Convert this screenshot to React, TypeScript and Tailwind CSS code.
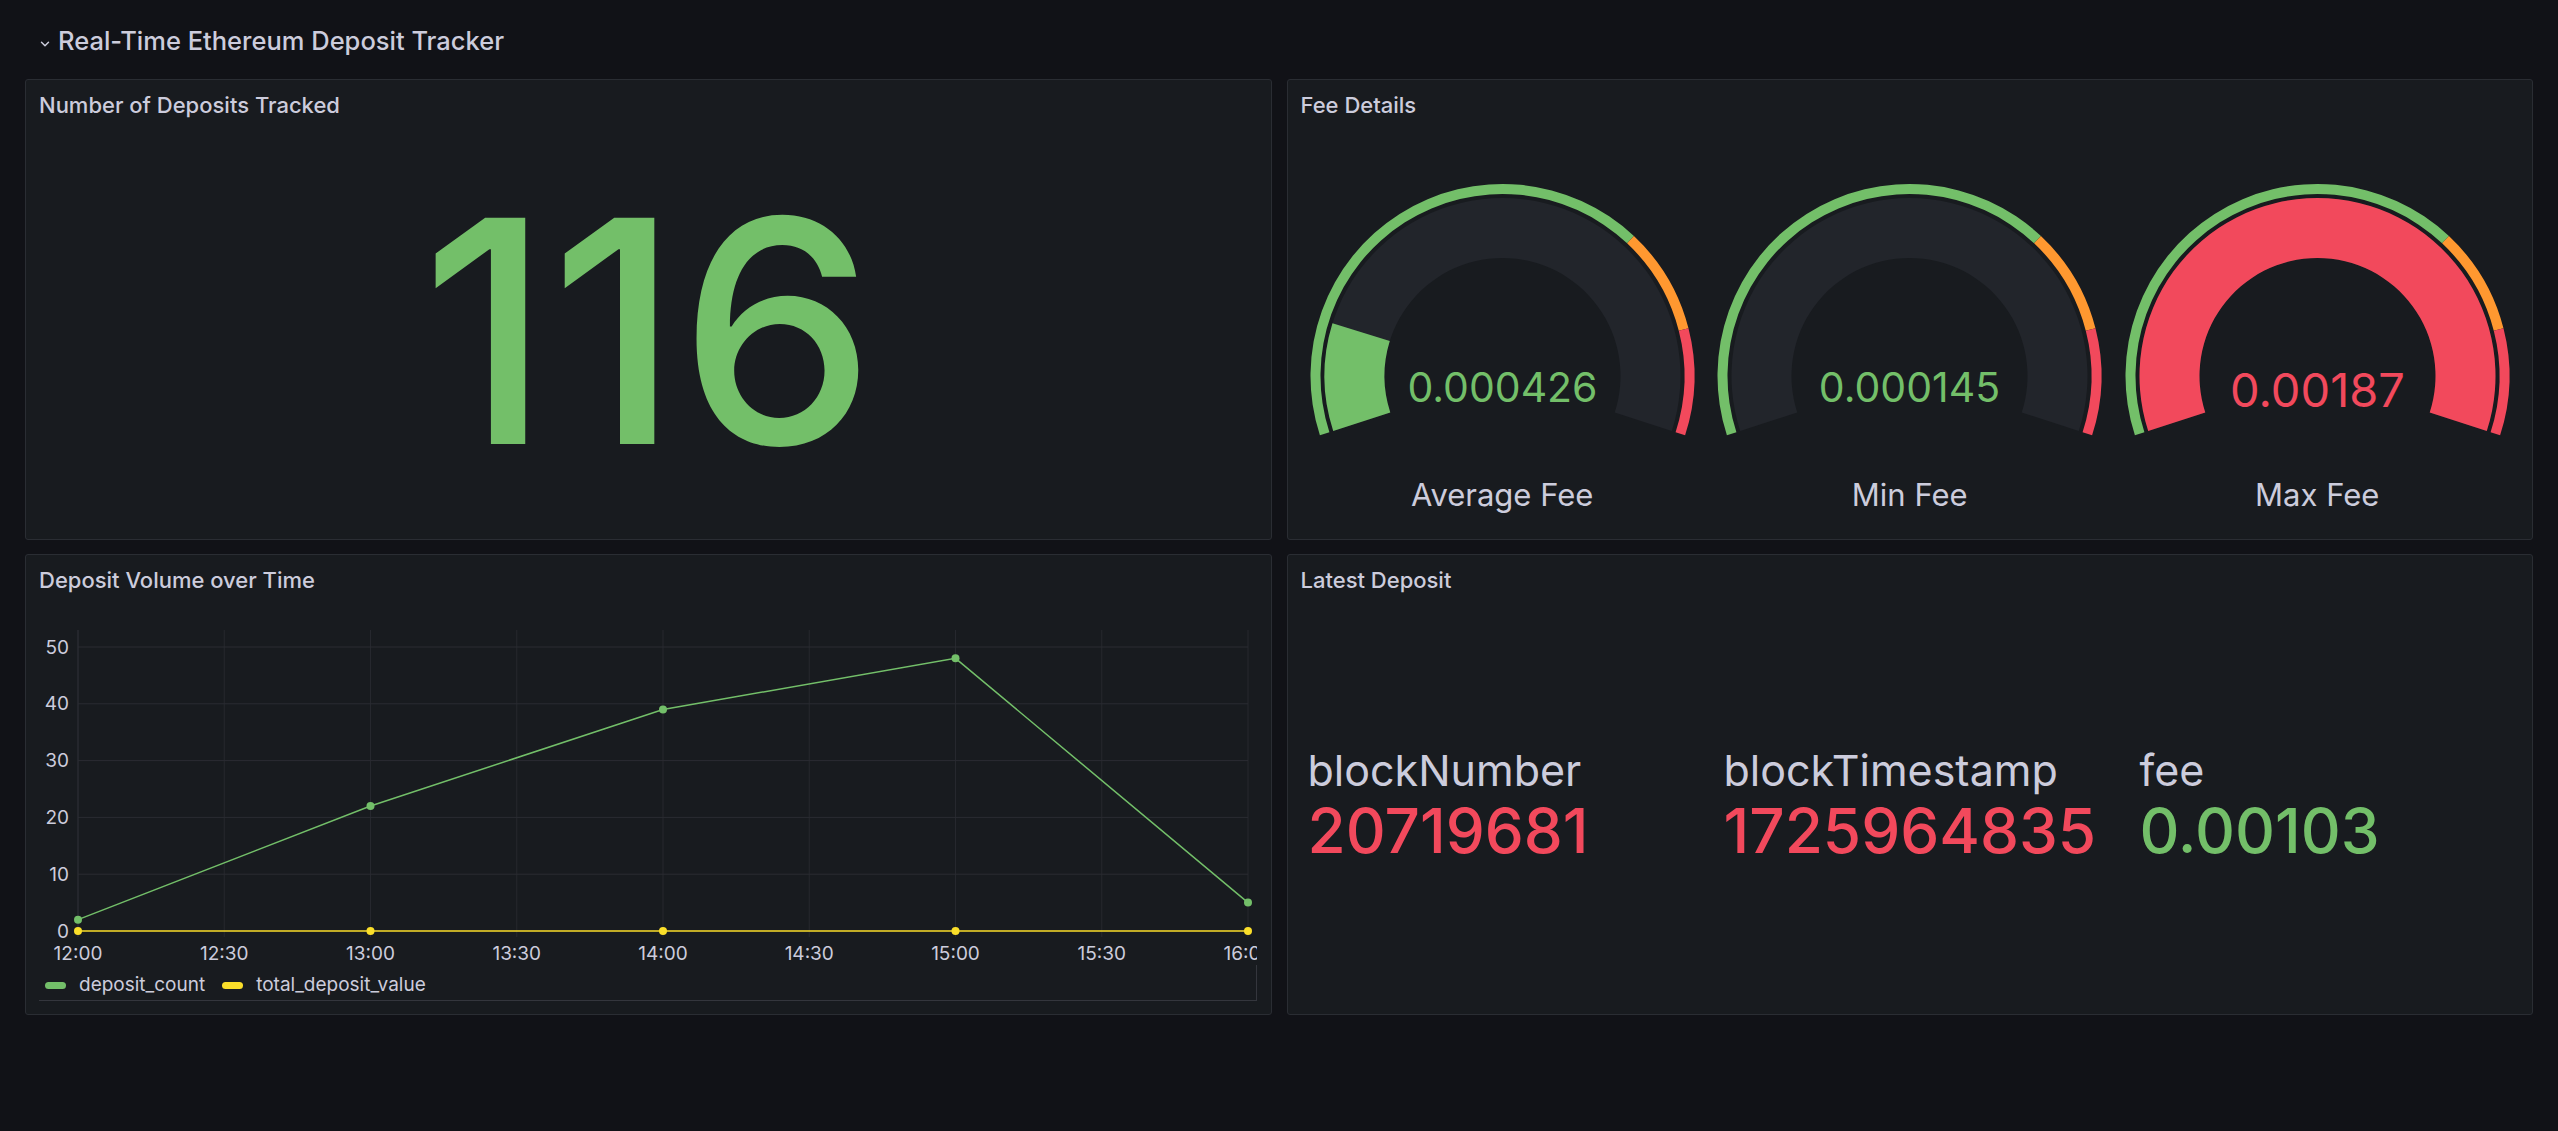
import { ChevronDown } from "lucide-react";

const GREEN = "#73bf69";
const ORANGE = "#ff9830";
const RED = "#f2495c";
const YELLOW = "#fade2a";

// angle 0 = straight up, positive = clockwise
function polar(cx: number, cy: number, r: number, a: number) {
  const rad = (a * Math.PI) / 180;
  return [cx + r * Math.sin(rad), cy - r * Math.cos(rad)];
}

function sector(cx: number, cy: number, rO: number, rI: number, a1: number, a2: number) {
  const large = a2 - a1 > 180 ? 1 : 0;
  const [x1, y1] = polar(cx, cy, rO, a1);
  const [x2, y2] = polar(cx, cy, rO, a2);
  const [x3, y3] = polar(cx, cy, rI, a2);
  const [x4, y4] = polar(cx, cy, rI, a1);
  return `M${x1} ${y1} A${rO} ${rO} 0 ${large} 1 ${x2} ${y2} L${x3} ${y3} A${rI} ${rI} 0 ${large} 0 ${x4} ${y4} Z`;
}

const START = -108;
const SWEEP = 216;
const at = (f: number) => START + f * SWEEP;

const gauges = [
  { label: "Average Fee", value: "0.000426", frac: 0.163, color: GREEN, size: 41, base: 226 },
  { label: "Min Fee", value: "0.000145", frac: 0, color: GREEN, size: 41, base: 226 },
  { label: "Max Fee", value: "0.00187", frac: 1, color: RED, size: 47, base: 231 },
];

type GaugeProps = { label: string; value: string; frac: number; color: string; size: number; base: number };

function Gauge({ label, value, frac, color, size, base }: GaugeProps) {
  const cx = 203.5;
  const cy = 200;
  return (
    <div className="flex flex-col items-center">
      <svg width="407" height="270" viewBox="0 0 407 270">
        <path d={sector(cx, cy, 192, 182, at(0), at(0.7))} fill={GREEN} />
        <path d={sector(cx, cy, 192, 182, at(0.7), at(0.85))} fill={ORANGE} />
        <path d={sector(cx, cy, 192, 182, at(0.85), at(1))} fill={RED} />
        <path d={sector(cx, cy, 178, 118, at(0), at(1))} fill="#22252b" />
        {frac > 0 && <path d={sector(cx, cy, 178, 118, at(0), at(frac))} fill={color} />}
        <text x={cx} y={base} textAnchor="middle" fontSize={size} fill={color} fontFamily="Inter, sans-serif">
          {value}
        </text>
      </svg>
      <div className="mt-[29px] h-[40px] leading-[40px] text-[31px] text-[#ccccdc]">{label}</div>
    </div>
  );
}

function Panel({ title, children }: { title: string; children?: React.ReactNode }) {
  return (
    <div className="flex h-[461px] flex-col overflow-hidden rounded-[3px] border border-[#2a2d33] bg-[#181b1f]">
      <div className="flex h-[51px] shrink-0 items-center px-[13px] text-[22px] font-medium text-[#ccccdc]">
        {title}
      </div>
      {children}
    </div>
  );
}

const hours = ["12:00", "12:30", "13:00", "13:30", "14:00", "14:30", "15:00", "15:30", "16:00"];
const counts = [2, 22, 39, 48, 5];

function Chart() {
  const x0 = 52;
  const x1 = 1222;
  const step = (x1 - x0) / 8;
  const y = (v: number) => 311 - v * 5.68;
  const pts = counts.map((v, i) => [x0 + i * step * 2, y(v)]);
  return (
    <svg width="1231" height="345" viewBox="0 0 1231 345" className="mt-[14px] shrink-0">
      {hours.map((h, i) => (
        <line key={h} x1={x0 + i * step} x2={x0 + i * step} y1="10" y2="317" stroke="#26282e" strokeWidth="1" />
      ))}
      {[0, 10, 20, 30, 40, 50].map((v) => (
        <g key={v}>
          {v > 0 && <line x1={x0} x2={x1} y1={y(v)} y2={y(v)} stroke="#2a2c32" strokeWidth="1" />}
          <text x="43" y={y(v)} textAnchor="end" dominantBaseline="central" fontSize="19" fill="#ccccdc" fontFamily="Inter, sans-serif">
            {v}
          </text>
        </g>
      ))}
      <line x1={x0} x2={x0} y1="10" y2="317" stroke="#2a2c32" strokeWidth="1" />
      {hours.map((h, i) => (
        <text key={h} x={x0 + i * step} y="333" textAnchor="middle" dominantBaseline="central" fontSize="19" fill="#ccccdc" fontFamily="Inter, sans-serif">
          {h}
        </text>
      ))}
      <line x1={x0} x2={x1} y1={y(0)} y2={y(0)} stroke={YELLOW} strokeOpacity="0.75" strokeWidth="2" />
      <polyline points={pts.map((p) => p.join(",")).join(" ")} fill="none" stroke={GREEN} strokeWidth="1.5" />
      {pts.map(([px, py], i) => (
        <circle key={i} cx={px} cy={py} r="4" fill={GREEN} />
      ))}
      {counts.map((_, i) => (
        <circle key={i} cx={x0 + i * step * 2} cy={y(0)} r="4" fill={YELLOW} />
      ))}
    </svg>
  );
}

const latest = [
  { name: "blockNumber", value: "20719681", color: RED },
  { name: "blockTimestamp", value: "1725964835", color: RED },
  { name: "fee", value: "0.00103", color: GREEN },
];

export default function App() {
  return (
    <div className="min-h-[1131px] w-full bg-[#111217] px-[25px] font-[Inter,sans-serif] text-[#ccccdc]">
      <div className="flex h-[79px] items-center pt-[4px]">
        <ChevronDown size={14} strokeWidth={2.5} className="ml-[13px] mr-[6px] mt-[4px] text-[#ccccdc]" />
        <span className="text-[25.5px] font-medium">Real-Time Ethereum Deposit Tracker</span>
      </div>

      <div className="grid grid-cols-2 gap-x-[15px] gap-y-[14px]">
        <Panel title="Number of Deposits Tracked">
          <div className="flex flex-1 items-center justify-center pb-[8px]">
            <span className="text-[311px] font-medium leading-none text-[#73bf69]">116</span>
          </div>
        </Panel>

        <Panel title="Fee Details">
          <div className="grid grid-cols-3 px-[11px] pt-[45px]">
            {gauges.map((g) => (
              <Gauge key={g.label} {...g} />
            ))}
          </div>
        </Panel>

        <Panel title="Deposit Volume over Time">
          <Chart />
          <div className="ml-[13px] flex h-[36px] w-[1218px] shrink-0 items-center gap-[17px] border-b border-r border-[#34363d] pl-[6px] pt-[6px] text-[19px]">
            <div className="flex items-center gap-[13px]">
              <span className="h-[7px] w-[21px] rounded-full bg-[#73bf69]" />
              <span>deposit_count</span>
            </div>
            <div className="flex items-center gap-[13px]">
              <span className="h-[7px] w-[21px] rounded-full bg-[#fade2a]" />
              <span>total_deposit_value</span>
            </div>
          </div>
        </Panel>

        <Panel title="Latest Deposit">
          <div className="flex flex-1 items-center pb-[8px] pl-[20px]">
            {latest.map((s) => (
              <div key={s.name} className="flex w-[416px] shrink-0 flex-col">
                <span className="h-[50px] text-[43px] leading-[50px] text-[#ccccdc]">{s.name}</span>
                <span className="h-[72px] text-[62px] font-medium leading-[72px]" style={{ color: s.color }}>
                  {s.value}
                </span>
              </div>
            ))}
          </div>
        </Panel>
      </div>
    </div>
  );
}
